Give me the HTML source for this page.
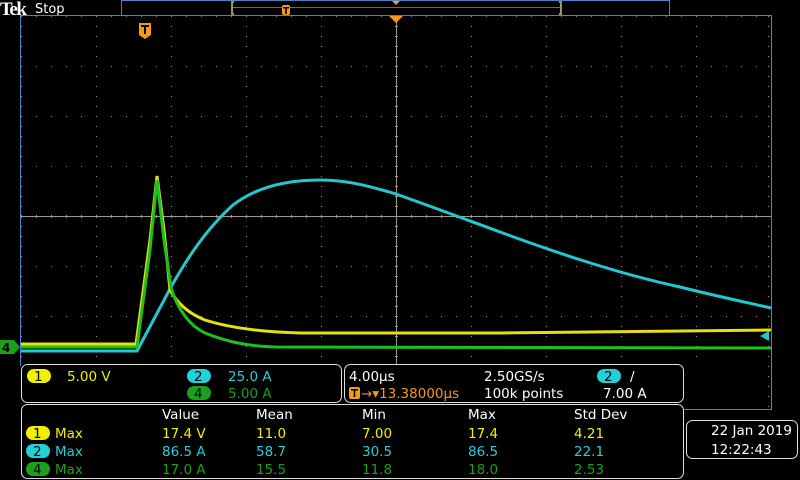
<!DOCTYPE html>
<html><head><style>
body{margin:0;width:800px;height:480px;background:#000;overflow:hidden;font-family:"DejaVu Sans","Liberation Sans",sans-serif;}
</style></head><body>
<svg width="800" height="480" xmlns="http://www.w3.org/2000/svg" style="position:absolute;left:0;top:0">
<!-- top bar -->
<text x="0" y="15" font-family="Liberation Serif,serif" font-weight="bold" font-size="19" fill="#fff" letter-spacing="-1.5">Tek</text>
<text x="35" y="13" font-size="13" fill="#fff">Stop</text>
<rect x="121.5" y="0.5" width="548" height="15" fill="none" stroke="#4a84c4" stroke-width="1"/>
<path d="M234 2 H232 V14 H234" stroke="#a09070" stroke-width="2" fill="none"/>
<path d="M559 2 H561 V14 H559" stroke="#a09070" stroke-width="2" fill="none"/>
<line x1="233" y1="7.5" x2="560" y2="7.5" stroke="#1aa01a"/>
<path d="M392 1 H400 L396 5 Z" fill="#f29a1a"/>
<rect x="282" y="5" width="8" height="10" rx="2" fill="#f29a1a"/>
<rect x="283" y="7" width="6" height="1.5" fill="#000"/><rect x="285.2" y="7" width="1.6" height="7" fill="#000"/>
<!-- graticule border -->
<path d="M20.5 366 V15.5 H771.5 V409" fill="none" stroke="#4a84c4"/>
<line x1="683" y1="409.5" x2="772" y2="409.5" stroke="#4a84c4"/>
<g stroke="#8a8a80" stroke-dasharray="1 14" stroke-width="1">
<line x1="21" y1="16.5" x2="771" y2="16.5"/>
<line x1="21" y1="66.5" x2="771" y2="66.5"/>
<line x1="21" y1="116.5" x2="771" y2="116.5"/>
<line x1="21" y1="166.5" x2="771" y2="166.5"/>
<line x1="21" y1="266.5" x2="771" y2="266.5"/>
<line x1="21" y1="316.5" x2="771" y2="316.5"/>
</g>
<g stroke="#999" stroke-dasharray="1 9" stroke-width="1">
<line x1="21.5" y1="16" x2="21.5" y2="366"/>
<line x1="96.5" y1="16" x2="96.5" y2="366"/>
<line x1="171.5" y1="16" x2="171.5" y2="366"/>
<line x1="246.5" y1="16" x2="246.5" y2="366"/>
<line x1="321.5" y1="16" x2="321.5" y2="366"/>
<line x1="471.5" y1="16" x2="471.5" y2="366"/>
<line x1="546.5" y1="16" x2="546.5" y2="366"/>
<line x1="621.5" y1="16" x2="621.5" y2="366"/>
<line x1="696.5" y1="16" x2="696.5" y2="366"/>
<line x1="768.5" y1="16" x2="768.5" y2="410"/>
</g>
<g stroke="#999" stroke-dasharray="1 14" stroke-width="3">
<line x1="21" y1="216.5" x2="771" y2="216.5"/>
</g>
<g stroke="#999" stroke-dasharray="1 9" stroke-width="3">
<line x1="396.5" y1="16" x2="396.5" y2="366"/>
</g>
<line x1="21" y1="216.5" x2="771" y2="216.5" stroke="#a09a88"/>
<line x1="396.5" y1="16" x2="396.5" y2="366" stroke="#a09a88"/>
<path d="M389 16 H403 L396 23 Z" fill="#f29a1a"/>
<!-- T marker -->
<path d="M139 23 H151 V35 L145 39 L139 35 Z" fill="#f29a1a"/>
<rect x="141" y="25" width="8" height="2" fill="#000"/><rect x="144" y="25" width="2" height="9" fill="#000"/>
<!-- traces -->
<path d="M21 351 H137 L171 287 C185 262 205 230 233 205 C255 188 285 180 320 180 C350 180 375 188 396 194 C430 206 470 221 500 232 C560 254 620 274 680 287 C720 297 745 302 771 308" stroke="#22c8d0" stroke-width="3" fill="none"/>
<path d="M21 344 H136 L150 240 L157 176 L164 230 L170 290 C178 305 190 314 205 320 C230 328 265 332 300 333 L500 333 L771 330" stroke="#e6e010" stroke-width="3" fill="none"/>
<path d="M21 347 H137 L150 250 L157 180 L164 240 L171 288 C178 310 190 326 205 333 C225 341 245 346 275 347 L771 348" stroke="#1ec01e" stroke-width="3" fill="none"/>
<!-- markers -->
<path d="M0 340 H14 L20 347 L14 354 H0 Z" fill="#1aa01a"/>
<text x="2" y="352" font-size="12" font-weight="bold" fill="#000">4</text>
<path d="M760 336 L769 331 V341 Z" fill="#22c8d0"/>
<!-- panels -->
<rect x="21.5" y="364.5" width="320" height="38" rx="6" fill="#000" stroke="#ddd"/>
<rect x="344.5" y="364.5" width="339" height="38" rx="6" fill="#000" stroke="#ddd"/>
<rect x="21.5" y="404.5" width="662" height="74" rx="6" fill="#000" stroke="#ddd"/>
<rect x="686.5" y="420.5" width="111" height="38" rx="6" fill="#000" stroke="#ddd"/>
<g font-size="13.5">
<rect x="27" y="369" width="24" height="14" rx="7" fill="#f0f000"/><text x="34" y="381" fill="#000">1</text>
<text x="67" y="381" fill="#f0f000">5.00 V</text>
<rect x="187" y="369" width="24" height="14" rx="7" fill="#22d0d8"/><text x="194" y="381" fill="#000">2</text>
<text x="228" y="381" fill="#22d0d8">25.0 A</text>
<rect x="187" y="386" width="24" height="14" rx="7" fill="#1aa01a"/><text x="194" y="398" fill="#000">4</text>
<text x="228" y="398" fill="#1aa01a">5.00 A</text>
<text x="349" y="381" fill="#fff">4.00µs</text>
<rect x="349" y="387" width="11" height="12" rx="2" fill="#f29a1a"/><rect x="351" y="389" width="7" height="1.5" fill="#000"/><rect x="353.7" y="389" width="1.6" height="8" fill="#000"/>
<text x="361" y="398" fill="#f29a1a">→▾13.38000µs</text>
<text x="484" y="381" fill="#fff">2.50GS/s</text>
<text x="484" y="398" fill="#fff">100k points</text>
<rect x="597" y="369" width="24" height="14" rx="7" fill="#22d0d8"/><text x="604" y="381" fill="#000">2</text>
<text x="630" y="381" fill="#fff">/</text>
<text x="603" y="398" fill="#fff">7.00 A</text>
<text x="162" y="419" fill="#fff">Value</text><text x="256" y="419" fill="#fff">Mean</text><text x="362" y="419" fill="#fff">Min</text><text x="468" y="419" fill="#fff">Max</text><text x="574" y="419" fill="#fff">Std Dev</text>
<rect x="26" y="426" width="24" height="14" rx="7" fill="#f0f000"/><text x="33" y="438" fill="#000">1</text>
<g fill="#f0f000"><text x="55" y="438">Max</text><text x="162" y="438">17.4 V</text><text x="256" y="438">11.0</text><text x="362" y="438">7.00</text><text x="468" y="438">17.4</text><text x="574" y="438">4.21</text></g>
<rect x="26" y="444" width="24" height="14" rx="7" fill="#22d0d8"/><text x="33" y="456" fill="#000">2</text>
<g fill="#22d0d8"><text x="55" y="456">Max</text><text x="162" y="456">86.5 A</text><text x="256" y="456">58.7</text><text x="362" y="456">30.5</text><text x="468" y="456">86.5</text><text x="574" y="456">22.1</text></g>
<rect x="26" y="462" width="24" height="14" rx="7" fill="#1aa01a"/><text x="33" y="474" fill="#000">4</text>
<g fill="#1aa01a"><text x="55" y="474">Max</text><text x="162" y="474">17.0 A</text><text x="256" y="474">15.5</text><text x="362" y="474">11.8</text><text x="468" y="474">18.0</text><text x="574" y="474">2.53</text></g>
<text x="711" y="435" fill="#fff">22 Jan  2019</text>
<text x="711" y="454" fill="#fff">12:22:43</text>
</g>
</svg>
</body></html>
